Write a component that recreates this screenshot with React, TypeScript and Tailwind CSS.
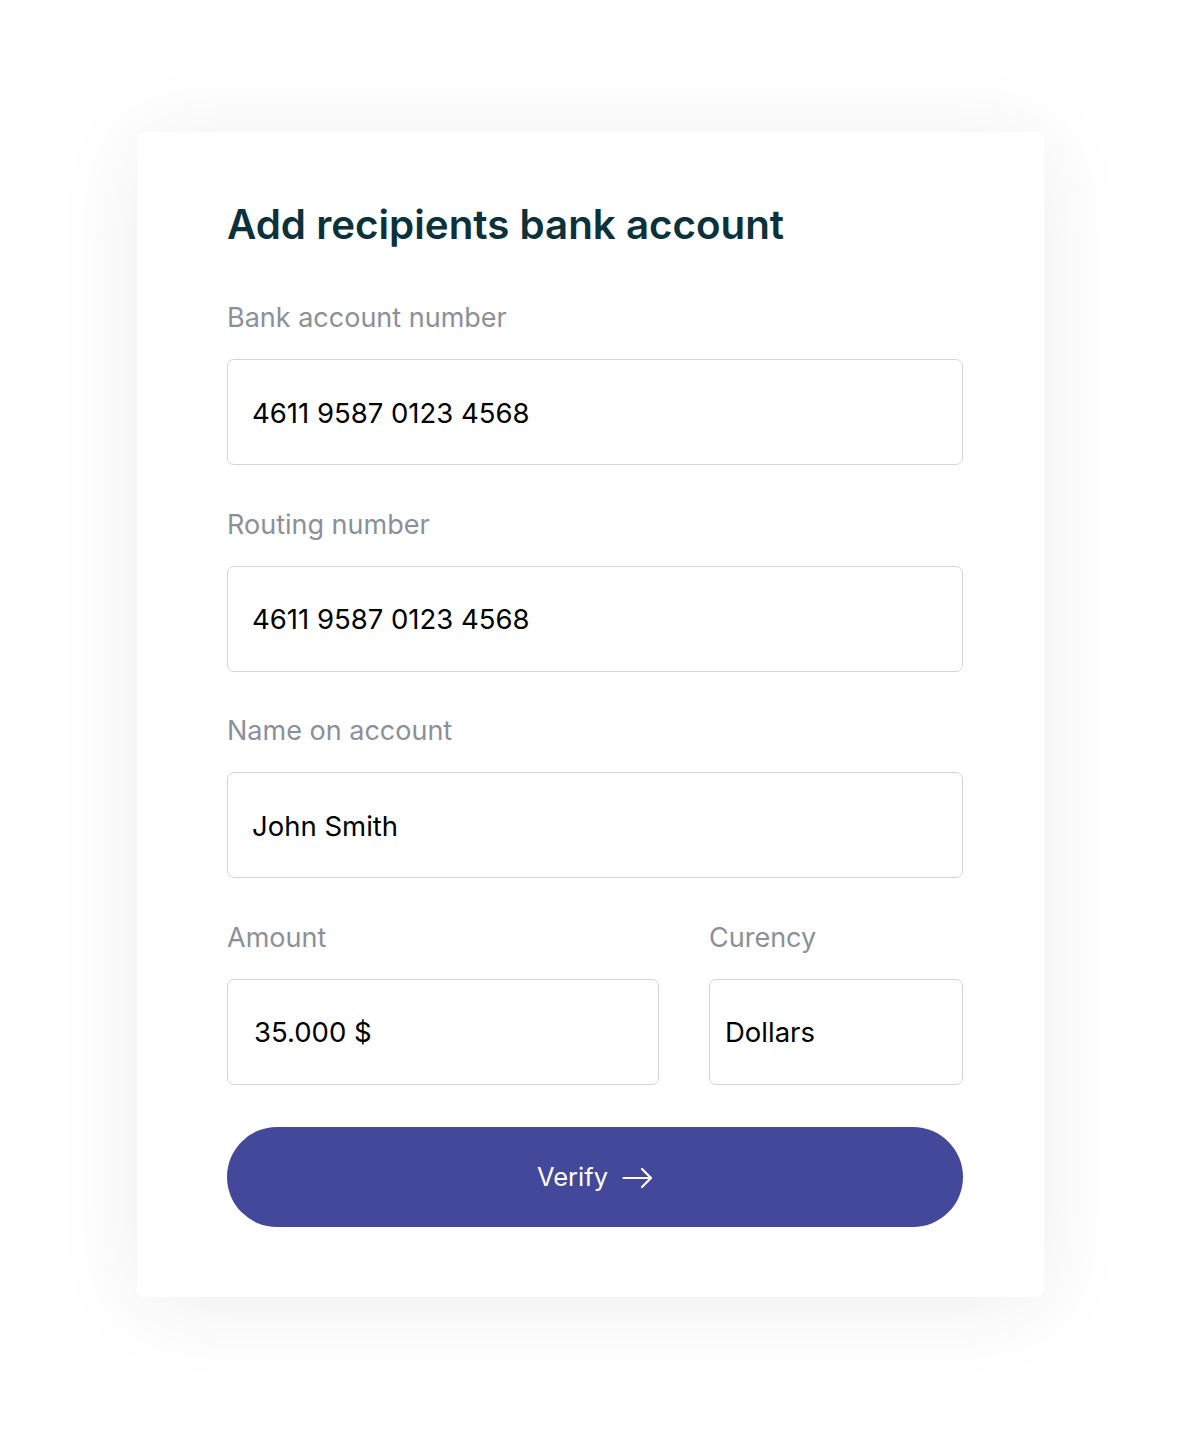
import React from 'react';

function Field({ label, value, className = '', textPad = 'pl-6' }: { label: string; value: string; className?: string; textPad?: string }) {
  return (
    <div className={`flex flex-col ${className}`}>
      <label className="text-[27px] leading-[32px] text-[#8b9099]">{label}</label>
      <div
        className={`mt-[25px] h-[106px] flex items-center rounded-[7px] border-[1.5px] border-[#d3d5db] bg-white ${textPad} pt-[3px] text-[27.5px] text-black`}
      >
        {value}
      </div>
    </div>
  );
}

export default function App() {
  return (
    <div className="min-h-screen bg-white flex items-start justify-center pt-[132px] pb-[141px] font-['Inter',sans-serif]">
      <div className="w-[907px] bg-white rounded-[8px] shadow-[0_8px_90px_rgba(0,0,0,0.07)] pt-[70px] pb-[70px] pl-[90px] pr-[81px]">
        {/* Title */}
        <h1 className="text-[40.3px] leading-[46px] font-semibold text-[#0b313a]">
          Add recipients bank account
        </h1>

        <div className="mt-[54px] flex flex-col gap-[43.5px]">
          <Field label="Bank account number" value="4611 9587 0123 4568" />
          <Field label="Routing number" value="4611 9587 0123 4568" />
          <Field label="Name on account" value="John Smith" />

          <div className="flex gap-[50px]">
            <Field label="Amount" value="35.000 $" className="w-[432px]" textPad="pl-[26px]" />
            <Field label="Curency" value="Dollars" className="flex-1" textPad="pl-[15px]" />
          </div>
        </div>

        {/* Verify button */}
        <button className="mt-[42px] w-full h-[100px] rounded-full bg-[#43489a] text-white text-[25.5px] flex items-center justify-center gap-[14px] pt-[2px]">
          <span>Verify</span>
          <svg width="31" height="22" viewBox="0 0 31 22" fill="none" stroke="currentColor" strokeWidth="2.2" strokeLinecap="round" strokeLinejoin="round">
            <path d="M1.5 11H29" />
            <path d="M20 2L29 11L20 20" />
          </svg>
        </button>
      </div>
    </div>
  );
}
